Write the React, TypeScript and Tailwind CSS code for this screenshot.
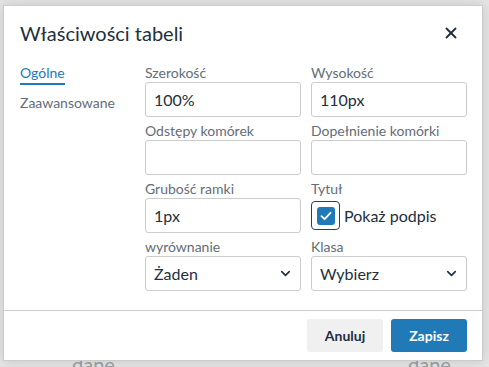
import { ChevronDown, X } from 'lucide-react'

const font = { fontFamily: 'Lato, "Open Sans", sans-serif' }

function Field({ label, children }: { label: string; children: React.ReactNode }) {
  return (
    <div className="flex flex-col">
      <div className="h-[19px] text-[14px] leading-[19px] text-[#646d78]">{label}</div>
      {children}
    </div>
  )
}

function TextInput({ value }: { value: string }) {
  return (
    <div className="h-[35px] border border-[#cccccc] rounded-[3px] bg-white px-[8px] flex items-center text-[16px] text-[#222f3e]">
      {value}
    </div>
  )
}

function Select({ value }: { value: string }) {
  return (
    <div className="h-[35px] border border-[#cccccc] rounded-[3px] bg-white pl-[8px] pr-[7px] flex items-center justify-between text-[16px] text-[#222f3e]">
      <span>{value}</span>
      <ChevronDown size={15} strokeWidth={2.6} className="text-[#222f3e]" />
    </div>
  )
}

export default function App() {
  return (
    <div className="relative w-[489px] h-[367px] overflow-hidden bg-[#e6e6e6] pt-[5px] pl-[3px]" style={font}>
      {/* table behind the dialog */}
      <div className="absolute left-[72px] top-[352px] text-[20px] leading-[24px] text-[#9aa0a6]">dane</div>
      <div className="absolute left-[408px] top-[352px] text-[20px] leading-[24px] text-[#9aa0a6]">dane</div>

      <div className="relative w-[480px] h-[356px] bg-white border border-[#cccccc] shadow-[0_0_12px_rgba(0,0,0,0.15)] flex flex-col">
        {/* header */}
        <div className="h-[53px] flex items-center justify-between pl-[16px] pr-[22px]">
          <div className="text-[20px] text-[#222f3e]">Właściwości tabeli</div>
          <X size={18} strokeWidth={2.5} className="text-[#222f3e]" />
        </div>

        {/* body */}
        <div className="flex-1 flex pl-[16px] pr-[15px] pt-[4px]">
          <div className="w-[125px] flex flex-col text-[14px] text-[#646d78]">
            <div className="h-[19px] leading-[19px] text-[#207ab7] self-start">Ogólne</div>
            <div className="w-[45px] h-[2px] bg-[#207ab7] mt-[1px]" />
            <div className="mt-[8px] leading-[19px]">Zaawansowane</div>
          </div>
          <div className="flex-1 grid grid-cols-2 gap-x-[10px] gap-y-[4px] content-start">
            <Field label="Szerokość"><TextInput value="100%" /></Field>
            <Field label="Wysokość"><TextInput value="110px" /></Field>
            <Field label="Odstępy komórek"><TextInput value="" /></Field>
            <Field label="Dopełnienie komórki"><TextInput value="" /></Field>
            <Field label="Grubość ramki"><TextInput value="1px" /></Field>
            <Field label="Tytuł">
              <div className="h-[35px] flex items-center">
                <div className="w-[29px] h-[29px] rounded-[4px] border border-[#2a3f54] flex items-center justify-center">
                  <div className="w-[18px] h-[18px] rounded-[3px] bg-[#207ab7] flex items-center justify-center">
                    <svg width="14" height="14" viewBox="0 0 14 14" fill="none">
                      <path d="M2.5 7.2 L5.6 10.2 L11.5 3.8" stroke="white" strokeWidth="1.8" strokeLinecap="round" strokeLinejoin="round" />
                    </svg>
                  </div>
                </div>
                <span className="ml-[4px] text-[16px] text-[#222f3e]">Pokaż podpis</span>
              </div>
            </Field>
            <Field label="wyrównanie"><Select value="Żaden" /></Field>
            <Field label="Klasa"><Select value="Wybierz" /></Field>
          </div>
        </div>

        {/* footer */}
        <div className="h-[50px] border-t border-[#cccccc] flex items-center justify-end gap-[8px] pr-[15px]">
          <button className="w-[76px] h-[33px] rounded-[3px] bg-[#f0f0f0] text-[14px] font-bold text-[#222f3e]">Anuluj</button>
          <button className="w-[76px] h-[33px] rounded-[3px] bg-[#207ab7] text-[14px] font-bold text-white">Zapisz</button>
        </div>
      </div>
    </div>
  )
}
